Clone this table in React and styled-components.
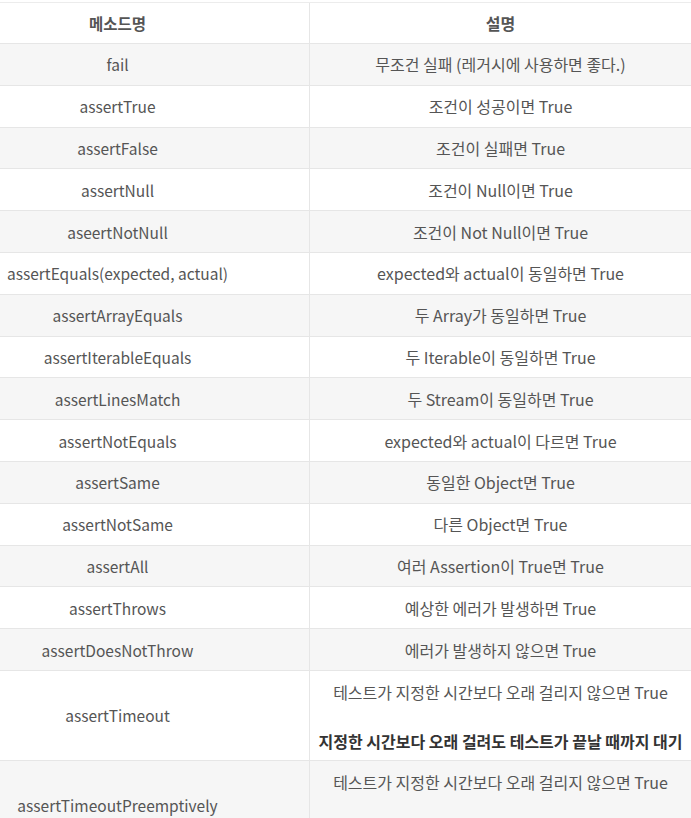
import React from 'react'
import styled, {createGlobalStyle} from "styled-components"

const GlobalStyle = createGlobalStyle`
    body{
        margin: 0;
        background: #fff;
        font-family: "Noto Sans CJK KR", "Noto Sans", sans-serif;
    }
`

const TableWrapper = styled.div`
    width: 100%;
    padding-top: 2px;
    color: #555;
    overflow: hidden;
`

const Row = styled.div`
    display: grid;
    grid-template-columns: 310px 1fr;
    box-sizing: border-box;
    min-height: ${props => props.tall ? '90px' : props.head ? '42px' : '41.8px'};
    background: ${props => props.shaded ? '#f6f6f6' : '#fff'};
    border-bottom: 1px solid #e6e6e6;
    border-top: ${props => props.head ? '1px solid #ececec' : 'none'};
    font-weight: ${props => props.head ? 'bold' : 'normal'};
`

const MethodCell = styled.div`
    display: flex;
    align-items: center;
    justify-content: center;
    padding-right: 74px;
    border-right: 1px solid #e6e6e6;
    white-space: nowrap;
    font-size: 15.5px;
`

const DescCell = styled.div`
    display: flex;
    flex-direction: column;
    align-items: center;
    justify-content: ${props => props.tall ? 'flex-start' : 'center'};
    gap: 27px;
    padding: ${props => props.tall ? '10px 0 8px' : '0'};
    white-space: nowrap;
    font-size: 16px;
`

const Line = styled.span`
    line-height: 22px;
    font-weight: ${props => props.strong ? 'bold' : 'normal'};
    color: ${props => props.strong ? '#333' : '#555'};
`

const rows = [
    ['fail', ['무조건 실패 (레거시에 사용하면 좋다.)']],
    ['assertTrue', ['조건이 성공이면 True']],
    ['assertFalse', ['조건이 실패면 True']],
    ['assertNull', ['조건이 Null이면 True']],
    ['aseertNotNull', ['조건이 Not Null이면 True']],
    ['assertEquals(expected, actual)', ['expected와 actual이 동일하면 True']],
    ['assertArrayEquals', ['두 Array가 동일하면 True']],
    ['assertIterableEquals', ['두 Iterable이 동일하면 True']],
    ['assertLinesMatch', ['두 Stream이 동일하면 True']],
    ['assertNotEquals', ['expected와 actual이 다르면 True']],
    ['assertSame', ['동일한 Object면 True']],
    ['assertNotSame', ['다른 Object면 True']],
    ['assertAll', ['여러 Assertion이 True면 True']],
    ['assertThrows', ['예상한 에러가 발생하면 True']],
    ['assertDoesNotThrow', ['에러가 발생하지 않으면 True']],
    ['assertTimeout', ['테스트가 지정한 시간보다 오래 걸리지 않으면 True', '지정한 시간보다 오래 걸려도 테스트가 끝날 때까지 대기'], true],
    ['assertTimeoutPreemptively', ['테스트가 지정한 시간보다 오래 걸리지 않으면 True'], true],
]

const App = () => {
    return (
        <>
            <GlobalStyle />
            <TableWrapper>
                <Row head>
                    <MethodCell>메소드명</MethodCell>
                    <DescCell>설명</DescCell>
                </Row>
                {rows.map(([name, desc, tall], i) => (
                    <Row key={name} shaded={i % 2 === 0} tall={tall}>
                        <MethodCell>{name}</MethodCell>
                        <DescCell tall={tall}>
                            {desc.map((d, j) => (
                                <Line key={j} strong={j === 1}>{d}</Line>
                            ))}
                        </DescCell>
                    </Row>
                ))}
            </TableWrapper>
        </>
    )
}

export default App
